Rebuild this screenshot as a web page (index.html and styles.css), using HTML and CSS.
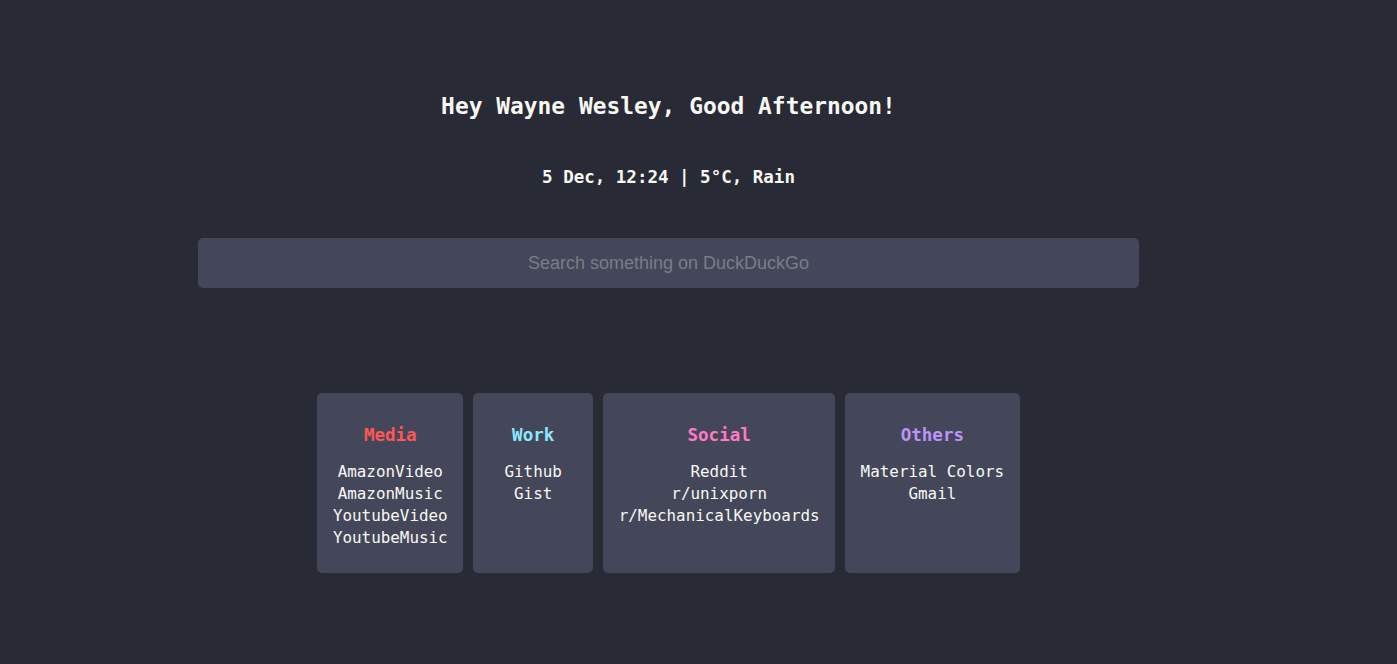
FILE: index.html
```html
<!DOCTYPE html>
<html lang="en">
<head>
<meta charset="utf-8">
<title>Startpage</title>
<link rel="stylesheet" href="styles.css">
</head>
<body>
<main class="page">
  <h1 class="greeting">Hey Wayne Wesley, Good Afternoon!</h1>
  <p class="info">5 Dec, 12:24 | 5°C, Rain</p>
  <input class="search" type="text" placeholder="Search something on DuckDuckGo">
  <section class="cards">
    <div class="card">
      <h2 class="card-title media">Media</h2>
      <a class="link" href="#">AmazonVideo</a>
      <a class="link" href="#">AmazonMusic</a>
      <a class="link" href="#">YoutubeVideo</a>
      <a class="link" href="#">YoutubeMusic</a>
    </div>
    <div class="card">
      <h2 class="card-title work">Work</h2>
      <a class="link" href="#">Github</a>
      <a class="link" href="#">Gist</a>
    </div>
    <div class="card">
      <h2 class="card-title social">Social</h2>
      <a class="link" href="#">Reddit</a>
      <a class="link" href="#">r/unixporn</a>
      <a class="link" href="#">r/MechanicalKeyboards</a>
    </div>
    <div class="card">
      <h2 class="card-title others">Others</h2>
      <a class="link" href="#">Material Colors</a>
      <a class="link" href="#">Gmail</a>
    </div>
  </section>
</main>
</body>
</html>
```

FILE: styles.css
```css
html, body {
  margin: 0;
  padding: 0;
  background: #282a36;
  height: 100%;
}

body {
  font-family: "DejaVu Sans Mono", "Liberation Mono", monospace;
  color: #f8f8f2;
}

.page {
  width: 1337px;
  display: flex;
  flex-direction: column;
  align-items: center;
  padding-top: 92px;
}

.greeting {
  margin: 0;
  font-size: 22.9px;
  line-height: 28px;
  font-weight: bold;
  color: #f8f8f2;
}

.info {
  margin: 46px 0 0;
  font-size: 17.5px;
  line-height: 22px;
  font-weight: bold;
  color: #f8f8f2;
}

.search {
  margin-top: 50px;
  width: 941px;
  height: 50px;
  box-sizing: border-box;
  border: none;
  outline: none;
  border-radius: 5px;
  background: #44475a;
  color: #f8f8f2;
  text-align: center;
  font-family: "Liberation Sans", Arial, sans-serif;
  font-size: 18px;
  padding: 0 10px;
}

.search::placeholder {
  color: #7b7c88;
}

.cards {
  margin-top: 105px;
  display: flex;
  gap: 10px;
}

.card {
  background: #44475a;
  border-radius: 5px;
  height: 180px;
  min-width: 120px;
  box-sizing: border-box;
  padding: 30px 15.5px 0;
  display: flex;
  flex-direction: column;
  align-items: center;
}

.card-title {
  margin: 0 0 14px;
  font-size: 17.5px;
  line-height: 24px;
  font-weight: bold;
}

.media { color: #ff5555; }
.work { color: #8be9fd; }
.social { color: #ff79c6; }
.others { color: #bd93f9; }

.link {
  color: #f8f8f2;
  text-decoration: none;
  font-size: 15.9px;
  line-height: 22px;
  white-space: nowrap;
}
```
